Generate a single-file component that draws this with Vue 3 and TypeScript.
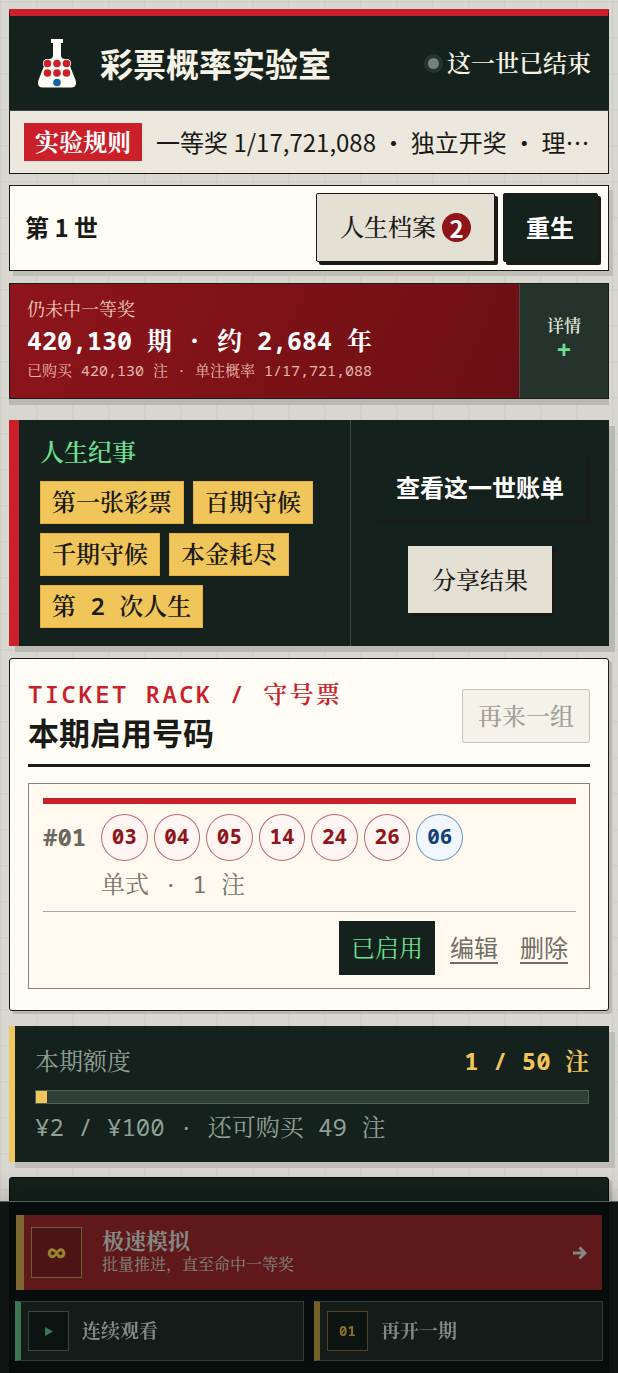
<script setup lang="ts">
import { ref } from 'vue'

interface Ball {
  value: string
  blue?: boolean
}

const milestones: string[] = ['第一张彩票', '百期守候', '千期守候', '本金耗尽', '第 2 次人生']
const balls: Ball[] = [
  { value: '03' },
  { value: '04' },
  { value: '05' },
  { value: '14' },
  { value: '24' },
  { value: '26' },
  { value: '06', blue: true },
]
const used = ref(1)
const limit = 50
</script>

<template>
  <div class="page" lang="zh-CN">
    <header class="masthead">
      <div class="brand-row">
        <svg class="flask" viewBox="0 0 38 49" aria-hidden="true">
          <path
            d="M13 0h12v4h-2v12c0 3 1.500 4 5 4a4.500 4.500 0 0 1 4 7l5.500 14c1.500 4 0 7.500-4 7.500h-29c-4 0-5.500-3.500-4-7.500L6 27a4.500 4.500 0 0 1 4-7c3.500 0 5-1 5-4V4h-2z"
            fill="#fffdf5"
          />
          <g fill="#fffdf5">
            <circle cx="9.500" cy="24.500" r="4.600" />
            <circle cx="28.500" cy="24.500" r="4.600" />
          </g>
          <g fill="#cb202a">
            <circle cx="9.500" cy="24.500" r="3.800" />
            <circle cx="19" cy="24.500" r="3.800" />
            <circle cx="28.500" cy="24.500" r="3.800" />
            <circle cx="9.500" cy="34" r="3.800" />
            <circle cx="19" cy="34" r="3.800" />
            <circle cx="28.500" cy="34" r="3.800" />
          </g>
          <circle cx="19" cy="43.500" r="3.800" fill="#1761a5" />
        </svg>
        <h1>彩票概率实验室</h1>
        <p class="status"><i class="dot"></i>这一世已结束</p>
      </div>
      <div class="rules">
        <strong>实验规则</strong>
        <p>一等奖 1/17,721,088 ・ 独立开奖 ・ 理论返奖率</p>
      </div>
    </header>

    <section class="life-bar">
      <h2>第 1 世</h2>
      <button type="button" class="archive">人生档案<span class="badge">2</span></button>
      <button type="button" class="rebirth">重生</button>
    </section>

    <section class="summary">
      <div class="summary-main">
        <p class="summary-label">仍未中一等奖</p>
        <p class="summary-value">420,130 期 · 约 2,684 年</p>
        <p class="summary-note">已购买 420,130 注 · 单注概率 1/17,721,088</p>
      </div>
      <button type="button" class="detail">详情<span>+</span></button>
    </section>

    <section class="chronicle">
      <div class="events">
        <h2>人生纪事</h2>
        <ul>
          <li v-for="m in milestones" :key="m">{{ m }}</li>
        </ul>
      </div>
      <div class="chronicle-actions">
        <button type="button" class="bill">查看这一世账单</button>
        <button type="button" class="share">分享结果</button>
      </div>
    </section>

    <section class="rack">
      <div class="rack-head">
        <div>
          <p class="eyebrow">TICKET RACK / 守号票</p>
          <h2>本期启用号码</h2>
        </div>
        <button type="button" class="again" disabled>再来一组</button>
      </div>
      <article class="ticket">
        <div class="ticket-body">
          <span class="ticket-no">#01</span>
          <div>
            <div class="balls">
              <span v-for="b in balls" :key="b.value" class="ball" :class="{ blue: b.blue }">{{ b.value }}</span>
            </div>
            <p class="ticket-type">单式 · 1 注</p>
          </div>
        </div>
        <div class="ticket-actions">
          <button type="button" class="enabled">已启用</button>
          <button type="button" class="text-btn">编辑</button>
          <button type="button" class="text-btn">删除</button>
        </div>
      </article>
    </section>

    <section class="quota">
      <div class="quota-head">
        <span>本期额度</span>
        <strong>{{ used }} / {{ limit }} 注</strong>
      </div>
      <div class="bar"><div class="fill" :style="{ width: (used / limit) * 100 + '%' }"></div></div>
      <p>¥{{ used * 2 }} / ¥{{ limit * 2 }} · 还可购买 {{ limit - used }} 注</p>
    </section>

    <section class="draw-panel"></section>

    <nav class="dock">
      <button type="button" class="turbo">
        <span class="key">∞</span>
        <span class="turbo-text">
          <strong>极速模拟</strong>
          <small>批量推进，直至命中一等奖</small>
        </span>
        <svg class="arrow" viewBox="0 0 14 14" aria-hidden="true">
          <path d="M0 7h12M6.500 1.500L12 7l-5.500 5.500" fill="none" stroke="currentColor" stroke-width="3" />
        </svg>
      </button>
      <button type="button" class="mode watch">
        <span class="key">
          <svg viewBox="0 0 8 9" aria-hidden="true"><path d="M0 0l8 4.500L0 9z" fill="currentColor" /></svg>
        </span>
        <strong>连续观看</strong>
      </button>
      <button type="button" class="mode once">
        <span class="key">01</span>
        <strong>再开一期</strong>
      </button>
    </nav>
  </div>
</template>

<style>
body {
  margin: 0;
  background: #d7d6cf;
}
</style>

<style scoped>
.page,
.page * {
  box-sizing: border-box;
}
.page {
  --ink: #1a1a17;
  --green: #15211c;
  --red: #cb202a;
  --gold: #f0c559;
  --paper: #fffdf6;
  --mono: "Noto Sans Mono", "Liberation Mono", "Noto Serif CJK SC", monospace;
  --sans: "Noto Sans CJK SC", sans-serif;
  display: flex;
  flex-direction: column;
  min-height: 100vh;
  padding: 9px 9px 0;
  color: var(--ink);
  font: 24px/34px var(--mono);
  background-image:
    linear-gradient(#cfcec7 1px, transparent 2px),
    linear-gradient(90deg, #cfcec7 1px, transparent 2px);
  background-size: 36px 36px;
  background-position: 0 1px;
}
h1, h2, p, ul {
  margin: 0;
  padding: 0;
}
button {
  font: inherit;
  color: inherit;
  border: 0;
  border-radius: 0;
  padding: 0;
  background: none;
}

.masthead {
  border: 1px solid var(--ink);
  border-top: 7px solid var(--red);
  background: #ece8dd;
}
.brand-row {
  display: flex;
  align-items: center;
  height: 95px;
  margin: 0 -1px;
  padding: 0 18px 0 29px;
  background: var(--green);
  border-bottom: 1px solid #3b4540;
  color: #f6f2e6;
}
.flask {
  width: 38px;
  height: 49px;
}
h1 {
  flex: 1;
  margin-left: 24px;
  font: 700 33px/48px var(--sans);
}
.status {
  display: flex;
  align-items: center;
  gap: 8px;
  font-weight: 600;
}
.dot {
  width: 11px;
  height: 11px;
  border-radius: 50%;
  background: #74827b;
  box-shadow: 0 0 0 4px #26342e;
}
.rules {
  display: flex;
  align-items: center;
  gap: 14px;
  height: 62px;
  padding: 0 18px 0 14px;
}
.rules strong {
  flex: none;
  padding: 0 11px;
  line-height: 38px;
  color: #fff;
  background: var(--red);
}
.rules p {
  min-width: 0;
  overflow: hidden;
  white-space: nowrap;
  text-overflow: ellipsis;
  font-family: var(--sans);
}

.life-bar {
  display: flex;
  align-items: center;
  gap: 8px;
  height: 86px;
  margin-top: 11px;
  padding: 0 10px 2px 15px;
  border: 1px solid var(--ink);
  background: var(--paper);
  box-shadow: 4px 5px 0 #bebdb6;
}
.life-bar h2 {
  flex: 1;
  font: 700 24px/34px var(--sans);
}
.archive,
.rebirth {
  height: 69px;
  border: 1px solid var(--ink);
  border-radius: 2px;
  box-shadow: 3px 3px 0 var(--ink);
}
.archive {
  display: flex;
  align-items: center;
  gap: 6px;
  padding: 0 23px;
  background: #e4e0d4;
  font-weight: 500;
}
.badge {
  width: 29px;
  border-radius: 50%;
  background: #8f151b;
  color: #fff;
  font: 700 24px/29px var(--sans);
  text-align: center;
}
.rebirth {
  padding: 0 23px 0 22px;
  color: #fff;
  background: var(--green);
  font: 700 24px/34px var(--sans);
}

.summary {
  display: flex;
  height: 116px;
  margin-top: 12px;
  border: 1px solid var(--ink);
  background: linear-gradient(115deg, #8e151b, #6a0f14 90%);
  box-shadow: 0 6px 0 #b9b8b2;
  color: #fff;
}
.summary-main {
  flex: 1;
  padding: 14px 17px;
}
.summary-label {
  font-size: 18px;
  line-height: 22px;
  color: #f1cdbf;
}
.summary-value {
  font-size: 25px;
  line-height: 40px;
  font-weight: 700;
}
.summary-note {
  font-size: 15px;
  line-height: 20px;
  color: #e5b6ac;
}
.detail {
  display: flex;
  flex-direction: column;
  align-items: center;
  justify-content: center;
  width: 89px;
  padding-bottom: 4px;
  border-left: 1px solid #3d5145;
  background: #26332d;
  color: #e4e8dc;
  font-size: 17px;
  line-height: 26px;
  font-weight: 600;
}
.detail span {
  color: #6fde8f;
  font: 700 24px/26px "Liberation Mono", monospace;
}

.chronicle {
  display: grid;
  grid-template-columns: 1fr 258px;
  margin-top: 21px;
  border-left: 10px solid var(--red);
  background: var(--green);
  box-shadow: 6px 6px 0 #b9b8b2;
}
.events {
  padding: 15px 21px 18px;
  border-right: 1px solid #414c46;
}
.events h2 {
  color: #6fde8f;
  font-size: 24px;
  line-height: 34px;
  font-weight: 600;
}
.events ul {
  display: flex;
  flex-wrap: wrap;
  gap: 9px;
  margin-top: 12px;
  list-style: none;
}
.events li {
  padding: 0 11px 2px;
  border: 1px solid #e9ad3a;
  background: var(--gold);
  line-height: 39px;
  font-weight: 600;
}
.chronicle-actions {
  display: flex;
  flex-direction: column;
  align-items: center;
  justify-content: center;
  gap: 26px;
}
.bill {
  height: 67px;
  padding: 0 23px;
  color: #fff;
  box-shadow: 3px 3px 0 var(--ink);
  font: 700 24px/34px var(--sans);
}
.share {
  height: 67px;
  padding: 0 24px;
  background: #e4e0d4;
  box-shadow: 3px 3px 0 var(--ink);
  font-weight: 500;
}

.rack {
  margin-top: 12px;
  padding: 18px 18px 21px;
  border: 1px solid var(--ink);
  border-radius: 3px;
  background: var(--paper);
  box-shadow: 3px 3px 0 #b9b8b2;
}
.rack-head {
  display: flex;
  align-items: center;
  justify-content: space-between;
  padding-bottom: 9px;
  border-bottom: 3px solid var(--ink);
}
.eyebrow {
  color: var(--red);
  letter-spacing: 0.1em;
  font-weight: 600;
}
.rack h2 {
  padding-bottom: 2px;
  font: 700 31px/42px var(--sans);
}
.again {
  height: 54px;
  padding: 0 15px;
  border: 1px solid #c6c4ba;
  border-radius: 2px;
  background: #f5f2e9;
  color: #a1a098;
  font-weight: 500;
}
.ticket {
  margin-top: 16px;
  padding: 14px 13px 13px 14px;
  border: 1px solid #87857c;
  background: #fff9ef;
}
.ticket-body {
  display: grid;
  grid-template-columns: 58px 1fr;
  padding: 10px 0 9px;
  border-top: 6px solid var(--red);
  border-bottom: 1px solid #aaa89e;
}
.ticket-no {
  color: #6b695f;
  font-weight: 700;
  line-height: 46px;
}
.balls {
  display: flex;
  gap: 6px;
  max-width: 362px;
}
.ball {
  flex: 1;
  height: 47px;
  border: 1px solid #bb6b76;
  border-radius: 50%;
  background: #fff6f3;
  color: #8f151b;
  font-size: 21px;
  line-height: 43px;
  font-weight: 700;
  text-align: center;
}
.ball.blue {
  border-color: #6f95b8;
  background: #f1f7fc;
  color: #114273;
}
.ticket-type {
  margin-top: 6px;
  padding-bottom: 1px;
  color: #77756b;
}
.ticket-actions {
  display: flex;
  align-items: center;
  justify-content: flex-end;
  padding: 9px 8px 0 0;
}
.enabled {
  height: 54px;
  margin-right: 15px;
  padding: 0 12px;
  background: var(--green);
  color: #6fde8f;
}
.text-btn {
  border-bottom: 2px solid #716b60;
  color: #716f66;
  font: 24px/30px var(--sans);
}
.text-btn + .text-btn {
  margin-left: 22px;
}

.quota {
  margin-top: 15px;
  padding: 18px 20px 18px;
  border-left: 6px solid var(--gold);
  background: var(--green);
  box-shadow: 6px 6px 0 #bebdb6;
  color: #91a097;
}
.quota-head {
  display: flex;
  justify-content: space-between;
}
.quota strong {
  color: var(--gold);
}
.bar {
  height: 14px;
  margin: 12px 0 6px;
  border: 1px solid #4e6157;
  background: #303e37;
}
.fill {
  height: 100%;
  background: var(--gold);
}
.draw-panel {
  flex: 1;
  margin-top: 15px;
  border: 1px solid #060c09;
  border-radius: 3px 3px 0 0;
  background: var(--green);
  box-shadow: 3px 3px 0 #b9b8b2;
}

.dock {
  position: fixed;
  inset: auto 0 0;
  display: grid;
  grid-template-columns: 1fr 1fr;
  gap: 11px 10px;
  padding: 13px 15px 12px;
  border-top: 1px solid #56605b;
  background: rgba(7, 13, 11, 0.96);
  box-shadow: 0 -6px 24px rgba(0, 0, 0, 0.25);
  color: #858984;
}
.dock button {
  display: flex;
  align-items: center;
}
.dock .key {
  display: grid;
  place-items: center;
}
.turbo {
  grid-column: 1 / -1;
  height: 75px;
  margin: 0 1px;
  padding: 0 15px 0 7px;
  border-left: 8px solid #7c6830;
  background: #60191b;
  text-align: left;
}
.turbo .key {
  width: 51px;
  height: 51px;
  border: 1px solid #6f6030;
  background: #4b1517;
  color: #9b8130;
  font-size: 30px;
  font-weight: 700;
}
.turbo-text {
  display: grid;
  flex: 1;
  margin-left: 20px;
  padding-bottom: 4px;
}
.turbo-text strong {
  font-size: 22px;
  line-height: 26px;
}
.turbo-text small {
  font-size: 16px;
  line-height: 22px;
}
.arrow {
  width: 14px;
  height: 14px;
}
.dock .mode {
  height: 60px;
  padding-left: 7px;
  border: 1px solid #323d37;
  background: #131c18;
  font-size: 19px;
}
.dock .watch {
  border-left: 6px solid #397653;
}
.dock .once {
  border-left: 6px solid #746128;
}
.mode .key {
  width: 41px;
  height: 40px;
  margin-right: 13px;
  border: 1px solid #3a453f;
  background: #0c1411;
  color: #397653;
}
.mode .key svg {
  width: 8px;
  height: 9px;
}
.dock .once .key {
  border-color: #51431e;
  color: #8a7027;
  font-size: 14px;
  font-weight: 700;
}
</style>
